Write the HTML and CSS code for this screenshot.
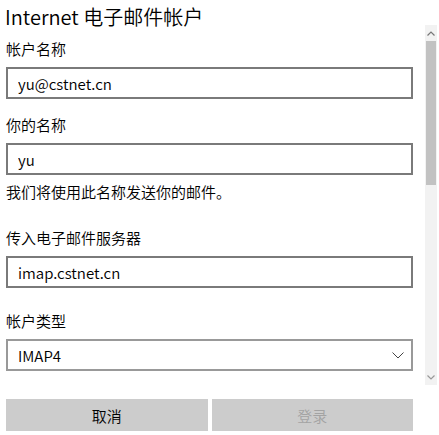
FILE: index.html
```html
<!DOCTYPE html>
<html lang="zh-CN">
<head>
    <meta charset="UTF-8">
    <meta name="viewport" content="width=device-width, initial-scale=1.0">
    <title>Internet 电子邮件帐户</title>
    <link rel="stylesheet" href="styles.css">
</head>
<body>

    <div class="window">
        <div class="content">
            <!-- 表单区域 -->
            <div class="form">
                <h1 class="title">Internet 电子邮件帐户</h1>

                <label class="label first">帐户名称</label>
                <input class="field" type="text" value="yu@cstnet.cn">

                <label class="label">你的名称</label>
                <input class="field" type="text" value="yu">
                <p class="hint">我们将使用此名称发送你的邮件。</p>

                <label class="label server">传入电子邮件服务器</label>
                <input class="field" type="text" value="imap.cstnet.cn">

                <label class="label type">帐户类型</label>
                <div class="select">
                    <span>IMAP4</span>
                    <svg width="12" height="7" viewBox="0 0 12 7">
                        <polyline points="0.5,0.5 6,6 11.5,0.5" fill="none" stroke="#444" stroke-width="1"/>
                    </svg>
                </div>
            </div>

            <!-- 滚动条 -->
            <div class="scrollbar">
                <div class="arrow">
                    <svg width="8" height="5" viewBox="0 0 8 5">
                        <polyline points="0.5,4.5 4,1 7.5,4.5" fill="none" stroke="#777" stroke-width="1.2"/>
                    </svg>
                </div>
                <div class="thumb"></div>
                <div class="track"></div>
                <div class="arrow">
                    <svg width="8" height="5" viewBox="0 0 8 5">
                        <polyline points="0.5,0.5 4,4 7.5,0.5" fill="none" stroke="#999" stroke-width="1.2"/>
                    </svg>
                </div>
            </div>
        </div>

        <div class="actions">
            <button class="btn">取消</button>
            <button class="btn" disabled>登录</button>
        </div>
    </div>

</body>
</html>
```

FILE: styles.css
```css
/* Reset dan gaya dasar */
* {
    margin: 0;
    padding: 0;
    box-sizing: border-box;
}

body {
    background: #fff;
    font-family: "Noto Sans CJK SC", sans-serif;
    font-weight: 350;
    color: #000;
}

.window {
    width: 439px;
    height: 435px;
    padding-left: 6px;
    overflow: hidden;
}

.content {
    display: flex;
    align-items: flex-start;
    gap: 12px;
}

.form {
    width: 407px;
    display: flex;
    flex-direction: column;
    padding-top: 3px;
}

.title {
    font-size: 20px;
    font-weight: 350;
    line-height: 28px;
    margin-left: -1px;
}

.label {
    display: block;
    font-size: 15px;
    line-height: 20px;
    margin-top: 16px;
}

.label.first {
    margin-top: 8px;
}

.label.server {
    margin-top: 26px;
}

.label.type {
    margin-top: 23px;
}

.field,
.select {
    margin-top: 8px;
    height: 32px;
    width: 100%;
    border: 2px solid #7a7a7a;
    padding: 0 10px;
    font-family: inherit;
    font-weight: inherit;
    font-size: 15px;
    color: #000;
    background: #fff;
    outline: none;
}

.select {
    display: flex;
    align-items: center;
    justify-content: space-between;
    border-color: #999;
    padding-right: 7px;
}

.hint {
    font-size: 15px;
    line-height: 20px;
    margin-top: 7px;
}

.scrollbar {
    margin-top: 25px;
    width: 12px;
    height: 360px;
    display: flex;
    flex-direction: column;
    background: #f2f2f2;
}

.arrow {
    height: 16px;
    display: flex;
    align-items: center;
    justify-content: center;
}

.thumb {
    height: 144px;
    margin: 0 1px;
    background: #c2c2c2;
}

.track {
    flex: 1;
}

.actions {
    margin-top: 14px;
    width: 407px;
    display: flex;
    gap: 4px;
}

.btn {
    flex: 1;
    height: 32px;
    border: none;
    background: #cccccc;
    font-family: inherit;
    font-weight: inherit;
    font-size: 15px;
    color: #000;
}

.btn:disabled {
    color: #a3a3a3;
}
```
